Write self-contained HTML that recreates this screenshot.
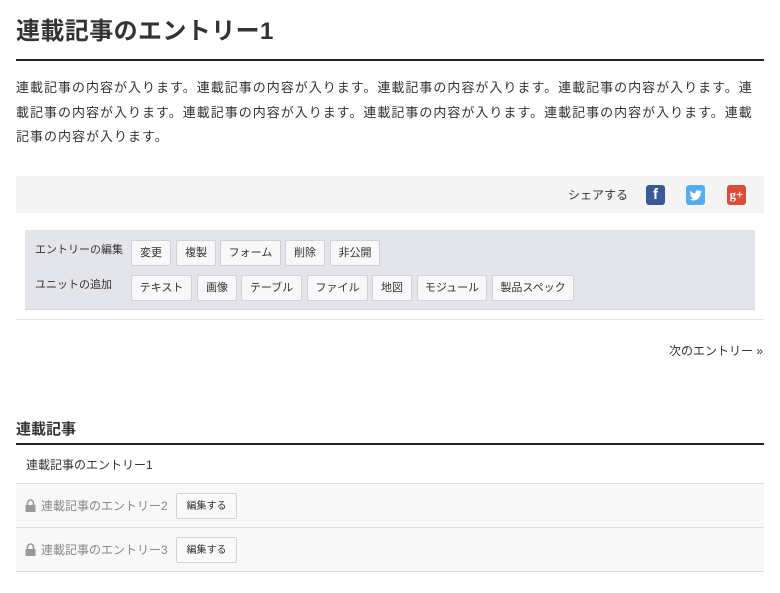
<!DOCTYPE html>
<html><head><meta charset="utf-8"><style>
body{margin:0;background:#fff;font-family:"Liberation Sans","Noto Sans CJK JP",sans-serif;color:#333;width:780px;height:593px;position:relative;overflow:hidden}
.a{position:absolute}
h1{position:absolute;left:16px;top:14px;margin:0;font-size:24px;font-weight:bold;color:#333;line-height:36px;letter-spacing:0.4px}
.hr{position:absolute;left:16px;width:748px;height:2px;background:#222}
p{position:absolute;left:16px;top:76px;width:748px;margin:0;font-size:13px;line-height:24.5px;color:#333;letter-spacing:1px}
.share{left:16px;top:176px;width:748px;height:37px;background:#f4f4f4}
.ico{position:absolute;top:9px;width:19px;height:20px;border-radius:3px;color:#fff;font-weight:bold;text-align:center;font-size:15px;line-height:20px;font-family:"Liberation Serif",serif}
.adm{left:25px;top:230px;width:730px;height:79px;background:#e4e5ea;border-bottom:1px solid #d6d7dc}
.lbl{position:absolute;left:10px;font-size:11px;color:#333}
.btn{position:absolute;border:1px solid #d2d2d2;background:#f8f8f8;border-radius:2px;font-size:11px;line-height:24px;text-align:center;color:#333;box-sizing:border-box;height:26px}
.row{position:absolute;left:16px;width:748px;border-bottom:1px solid #ddd;font-size:12px}
</style></head><body>
<h1>連載記事のエントリー1</h1>
<div class="hr" style="top:59px"></div>
<p>連載記事の内容が入ります。連載記事の内容が入ります。連載記事の内容が入ります。連載記事の内容が入ります。連載記事の内容が入ります。連載記事の内容が入ります。連載記事の内容が入ります。連載記事の内容が入ります。連載記事の内容が入ります。</p>
<div class="a share">
<span class="a" style="left:552px;top:10px;font-size:12px">シェアする</span>
<div class="ico" style="left:630px;background:#3b5998;font-family:'Liberation Sans',sans-serif">f</div>
<div class="ico" style="left:670px;background:#55acee"><svg width="19" height="20" viewBox="0 0 24 24" style="display:block"><path d="M20 7.5c-.6.3-1.2.4-1.8.5.7-.4 1.1-1 1.4-1.7-.6.4-1.3.6-2 .8a3.2 3.2 0 0 0-5.5 2.9A9 9 0 0 1 5.5 6.6a3.2 3.2 0 0 0 1 4.3c-.5 0-1-.2-1.4-.4 0 1.6 1.1 2.9 2.6 3.2-.5.1-1 .2-1.5.1.4 1.3 1.6 2.2 3 2.2A6.4 6.4 0 0 1 4.5 17.4 9 9 0 0 0 18.4 9.8v-.4c.6-.5 1.2-1.1 1.6-1.9z" fill="#fff"/></svg></div>
<div class="ico" style="left:711px;background:#dd4b39;font-size:13px">g+</div>
</div>
<div class="a adm">
<span class="lbl" style="top:11px">エントリーの編集</span>
<span class="lbl" style="top:46px">ユニットの追加</span>
<div class="btn" style="left:106px;top:10px;width:40px">変更</div>
<div class="btn" style="left:151px;top:10px;width:40px">複製</div>
<div class="btn" style="left:195px;top:10px;width:61px">フォーム</div>
<div class="btn" style="left:260px;top:10px;width:40px">削除</div>
<div class="btn" style="left:305px;top:10px;width:50px">非公開</div>
<div class="btn" style="left:106px;top:45px;width:61px">テキスト</div>
<div class="btn" style="left:172px;top:45px;width:40px">画像</div>
<div class="btn" style="left:216px;top:45px;width:61px">テーブル</div>
<div class="btn" style="left:282px;top:45px;width:61px">ファイル</div>
<div class="btn" style="left:347px;top:45px;width:40px">地図</div>
<div class="btn" style="left:392px;top:45px;width:70px">モジュール</div>
<div class="btn" style="left:467px;top:45px;width:82px">製品スペック</div>
</div>
<div class="a" style="left:16px;top:319px;width:748px;height:1px;background:#e4e4e4"></div>
<span class="a" style="left:669px;top:342px;font-size:12px">次のエントリー »</span>
<span class="a" style="left:16px;top:418px;font-size:15px;font-weight:bold">連載記事</span>
<div class="hr" style="top:443px"></div>
<div class="row" style="top:445px;height:38px;background:#fff"><span class="a" style="left:10px;top:11px">連載記事のエントリー1</span></div>
<div class="row" style="top:484px;height:43px;background:#f8f8f8;color:#888">
<svg class="a" style="left:9px;top:15px" width="11" height="13" viewBox="0 0 11 13"><path d="M2.5 6V4a3 3 0 0 1 6 0v2" stroke="#999" stroke-width="1.6" fill="none"/><rect x="0.5" y="6" width="10" height="7" fill="#999"/></svg>
<span class="a" style="left:25px;top:13px">連載記事のエントリー2</span>
<div class="btn" style="left:160px;top:9px;width:61px;background:#f9f9f9;font-size:10px;line-height:26px;color:#333">編集する</div></div>
<div class="row" style="top:528px;height:43px;background:#f8f8f8;color:#888">
<svg class="a" style="left:9px;top:15px" width="11" height="13" viewBox="0 0 11 13"><path d="M2.5 6V4a3 3 0 0 1 6 0v2" stroke="#999" stroke-width="1.6" fill="none"/><rect x="0.5" y="6" width="10" height="7" fill="#999"/></svg>
<span class="a" style="left:25px;top:13px">連載記事のエントリー3</span>
<div class="btn" style="left:160px;top:9px;width:61px;background:#f9f9f9;font-size:10px;line-height:26px;color:#333">編集する</div></div>
</body></html>
